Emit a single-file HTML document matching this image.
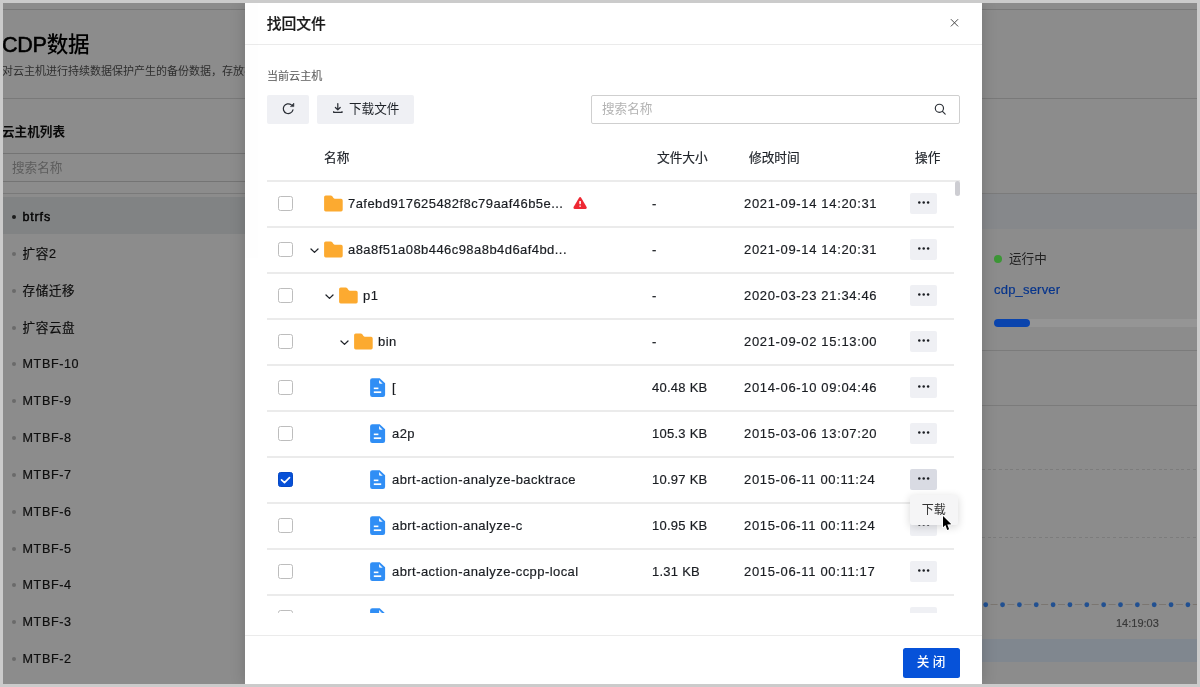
<!DOCTYPE html>
<html lang="zh-CN">
<head>
<meta charset="utf-8">
<title>CDP数据 - 找回文件</title>
<style>
*{box-sizing:border-box;margin:0;padding:0}
html,body{width:1200px;height:687px;overflow:hidden;background:#cbcbcb}
body{font-family:"Liberation Sans","Noto Sans CJK SC",sans-serif;font-size:12.6px;color:#1f2329;position:relative;-webkit-font-smoothing:antialiased}
.screen{position:absolute;left:3px;top:3px;width:1194px;height:681px;background:#fff;overflow:hidden;will-change:transform;opacity:.9999}
/* ---------- underlying page ---------- */
.page{position:absolute;left:0;top:0;width:1194px;height:681px;background:#fff}
.hl{position:absolute;height:1px;background:#dcdcdc;left:0;right:0}
.pg-title{position:absolute;left:-1px;top:27px;font-size:21.6px;font-weight:500;line-height:30px;color:#000;white-space:nowrap;letter-spacing:-.3px}
.pg-sub{position:absolute;left:-1px;top:60px;font-size:11px;line-height:16px;color:#555;white-space:nowrap}
.vm-h{position:absolute;left:-1px;top:119px;font-size:12.6px;font-weight:700;line-height:20px;color:#111;white-space:nowrap}
.vm-search{position:absolute;left:0;top:150px;width:400px;height:29px;border-top:1px solid #d4d4d4;border-bottom:1px solid #d4d4d4;font-size:12.6px;line-height:29px;padding-left:9px;color:#aaa}
.vm-list{position:absolute;left:0;top:194px;width:400px;list-style:none}
.vm-list li{height:36.85px;line-height:32.85px;padding-top:4px;padding-left:19.500px;font-size:12.6px;color:#1a1a1a;position:relative;white-space:nowrap;letter-spacing:.6px;-webkit-text-stroke:.2px #1a1a1a}
.vm-list li:before{content:"";position:absolute;left:8.500px;top:18px;width:4px;height:4px;border-radius:50%;background:#c2c2c2}
.vm-list li.on{background:#eceef1;color:#000;-webkit-text-stroke:.4px #000;letter-spacing:.8px}
.vm-list li.on:before{background:#333}
.mask{position:absolute;left:0;top:0;width:1194px;height:681px;background:rgba(0,0,0,.45)}
/* ---------- modal ---------- */
.modal{position:absolute;left:242px;top:0;width:737px;height:681px;background:#fff;box-shadow:0 0 14px rgba(0,0,0,.18)}

.m-title{position:absolute;left:21.700px;top:9.500px;font-size:14.8px;font-weight:500;line-height:22px;color:#1a1a1a;white-space:nowrap;-webkit-text-stroke:.15px #1a1a1a}
.m-close{position:absolute;left:704px;top:14px;width:11px;height:11px}
.m-hline{position:absolute;left:0;top:41px;width:737px;height:1px;background:#ebebeb}
.m-label{position:absolute;left:22px;top:64.500px;font-size:11.050px;line-height:16px;color:#606060;white-space:nowrap;-webkit-text-stroke:.1px #606060}
.btn{position:absolute;top:92px;height:29px;background:#eff0f4;border-radius:2px;font-size:12.6px;line-height:29px;color:#1f2329;white-space:nowrap}
.btn svg{position:absolute}
.m-search{position:absolute;left:346px;top:92px;width:368.5px;height:29px;border:1px solid #cfcfcf;border-radius:2px;font-size:12.6px;line-height:27px;padding-left:10px;color:#b3b3b3;background:#fff}
.m-search svg{position:absolute;right:12.200px;top:7.400px}
.th{position:absolute;top:145px;font-size:12.7px;line-height:20px;color:#1f2329;white-space:nowrap;-webkit-text-stroke:.18px #1f2329}
.tbody{position:absolute;left:22px;top:177px;width:693px;height:433px;overflow:hidden}
.row{-webkit-text-stroke:.18px #1a1d22;position:absolute;left:0;width:687px;height:46px;border-top:2px solid #ebebeb}
.row .cb{position:absolute;left:11px;top:14px;width:15px;height:15px;border:1px solid #bdbdbd;border-radius:2.500px;background:#fff}
.row .cb.on{background:#0650d8;border-color:#0648c4}
.row .cb svg{position:absolute;left:0;top:0}
.row .nm{position:absolute;top:0;line-height:44.5px;font-size:13px;white-space:nowrap;letter-spacing:.44px;color:#1a1d22}
.row .ic{position:absolute;overflow:visible}
.row .sz{position:absolute;left:385px;top:0;line-height:44.5px;font-size:13px;white-space:nowrap;letter-spacing:.25px;color:#1a1d22}
.row .tm{position:absolute;left:477px;top:0;line-height:44.5px;font-size:13px;white-space:nowrap;letter-spacing:.66px;color:#1a1d22}
.row .op{position:absolute;left:643px;top:11px;width:27px;height:21px;background:#eff0f4;border-radius:2px}.row .op svg{position:absolute;left:0;top:0;fill:#1a1d22}
.row .op.act{background:#d9dbe3}
.row .op i{position:absolute;top:8.7px;width:2.2px;height:2.2px;background:#1f2329;border-radius:50%}
.sb{position:absolute;left:687.500px;top:1px;width:5px;height:14.500px;border-radius:2.500px;background:#cdcdd2}.hline{position:absolute;left:22px;top:177px;width:693px;height:2px;background:#ebebeb}
.dd{position:absolute;left:665px;top:492px;width:47.500px;height:29.500px;background:#f5f5f6;border-radius:2px;box-shadow:0 2px 8px rgba(0,0,0,.16);font-size:12px;line-height:30px;text-align:center;color:#333}
.m-fline{position:absolute;left:0;top:632px;width:737px;height:1px;background:#ebebeb}
.m-ok{position:absolute;left:657.500px;top:645px;width:57px;height:29.500px;background:#0652d9;border-radius:2.500px;color:#fff;font-size:12.6px;font-weight:500;line-height:29.500px;text-align:center;white-space:nowrap}
.cursor{position:absolute;left:937.800px;top:511.200px}

.ov{position:absolute;left:0;top:0;width:1194px;height:681px;overflow:hidden}
.ov div,.ov span{position:absolute}
.r-band1{left:979px;top:191px;width:215px;height:35px;background:#86888b}
.r-line{left:979px;width:215px;height:1px;background:#7b7b7b}
.r-dash{left:979px;width:215px;height:1px;background:repeating-linear-gradient(90deg,#7c7c7c 0,#7c7c7c 3px,transparent 3px,transparent 5.700px)}
.r-dot{left:991px;top:252px;width:8px;height:8px;border-radius:50%;background:#3c9636}
.r-run{left:1006px;top:246px;font-size:12.6px;line-height:20px;color:#222;white-space:nowrap}
.r-link{left:991px;top:277px;font-size:13px;line-height:20px;color:#07358c;white-space:nowrap;letter-spacing:.2px;-webkit-text-stroke:.2px #07358c}
.r-track{left:991px;top:316px;width:203px;height:8px;background:#959595;border-radius:4px 0 0 4px}
.r-prog{left:991px;top:316px;width:36px;height:8px;background:#0a44ad;border-radius:4px}
.r-tl{left:979px;top:601px;width:215px;height:1px;background:repeating-linear-gradient(90deg,#7f7a75 0,#7f7a75 5px,transparent 5px,transparent 8.425px)}
.r-tl i{position:absolute;top:-1.900px;width:4.800px;height:4.800px;border-radius:50%;background:#215091}
.r-time{left:1113px;top:612px;font-size:11px;line-height:16px;color:#383838;-webkit-text-stroke:.15px #383838;white-space:nowrap;font-family:"Liberation Sans",sans-serif}
.r-band2{left:979px;top:636px;width:215px;height:23px;background:#80878f}
</style>
</head>
<body>
<div class="screen">
  <div class="page">
    <div class="hl" style="top:6px"></div>
    <div class="pg-title"><span style="-webkit-text-stroke:.55px #000">CDP</span>数据</div>
    <div class="pg-sub">对云主机进行持续数据保护产生的备份数据，存放在备份服务器</div>
    <div class="hl" style="top:95px"></div>
    <div class="vm-h">云主机列表</div>
    <div class="vm-search">搜索名称</div>
    <div class="hl" style="top:190px;width:400px"></div>
    <ul class="vm-list">
      <li class="on">btrfs</li>
      <li>扩容2</li>
      <li>存储迁移</li>
      <li>扩容云盘</li>
      <li>MTBF-10</li>
      <li>MTBF-9</li>
      <li>MTBF-8</li>
      <li>MTBF-7</li>
      <li>MTBF-6</li>
      <li>MTBF-5</li>
      <li>MTBF-4</li>
      <li>MTBF-3</li>
      <li>MTBF-2</li>
      <li>MTBF-1</li>
    </ul>
    <!--RIGHT-->
  </div>
  <div class="mask"></div>
  <div class="ov">
    <div class="r-line" style="top:190px"></div>
    <div class="r-band1"></div>
    <div class="r-dot"></div><span class="r-run">运行中</span>
    <span class="r-link">cdp_server</span>
    <div class="r-track"></div><div class="r-prog"></div>
    <div class="r-line" style="top:347px"></div>
    <div class="r-line" style="top:402px"></div>
    <div class="r-dash" style="top:466px"></div>
    <div class="r-dash" style="top:534px"></div>
    <svg class="r-tlsvg" style="position:absolute;left:979px;top:598px" width="215" height="8" viewBox="0 0 215 8"><path d="M-8.250 3.500H215" stroke="#7b7671" stroke-width="1" stroke-dasharray="7 9.850" fill="none"/><circle cx="3.70" cy="3.750" r="2.400" fill="#215091"/><circle cx="20.55" cy="3.750" r="2.400" fill="#215091"/><circle cx="37.40" cy="3.750" r="2.400" fill="#215091"/><circle cx="54.25" cy="3.750" r="2.400" fill="#215091"/><circle cx="71.10" cy="3.750" r="2.400" fill="#215091"/><circle cx="87.95" cy="3.750" r="2.400" fill="#215091"/><circle cx="104.80" cy="3.750" r="2.400" fill="#215091"/><circle cx="121.65" cy="3.750" r="2.400" fill="#215091"/><circle cx="138.50" cy="3.750" r="2.400" fill="#215091"/><circle cx="155.35" cy="3.750" r="2.400" fill="#215091"/><circle cx="172.20" cy="3.750" r="2.400" fill="#215091"/><circle cx="189.05" cy="3.750" r="2.400" fill="#215091"/><circle cx="205.90" cy="3.750" r="2.400" fill="#215091"/><circle cx="222.75" cy="3.750" r="2.400" fill="#215091"/></svg>
    <span class="r-time">14:19:03</span>
    <div class="r-band2"></div>
  </div>
  <div class="modal">
    <div class="m-title">找回文件</div>
    <svg class="m-close" viewBox="0 0 11 11"><path d="M1.900 2.200l7.200 7.200M9.100 2.200l-7.200 7.200" stroke="#4a4a4a" stroke-width="1" fill="none"/></svg>
    <div class="m-hline"></div>
    <div class="m-label">当前云主机</div>
    <div class="btn" style="left:22px;width:42px"><svg style="left:0;top:0" width="42" height="29" viewBox="0 0 42 29"><path d="M24.22 9.84A4.9 4.9 0 1 0 25.95 14.89" fill="none" stroke="#2b2f36" stroke-width="1.25" stroke-linecap="round"/><path d="M26.9 8.100v3.500h-3.500z" fill="#2b2f36" stroke="#2b2f36" stroke-width=".5" stroke-linejoin="round"/></svg></div>
    <div class="btn" style="left:72px;width:97px;padding-left:32px"><svg style="left:0;top:0" width="42" height="29" viewBox="0 0 42 29"><path d="M20.800 8.500v6.200M18.400 12.500l2.400 2.400 2.400-2.400M16.700 16.500v.900h8.300v-.900" fill="none" stroke="#2b2f36" stroke-width="1.250" stroke-linecap="round" stroke-linejoin="round"/></svg>下载文件</div>
    <div class="m-search">搜索名称<svg width="12" height="12" viewBox="0 0 12 12"><circle cx="5.400" cy="5.300" r="4.100" fill="none" stroke="#2b2f36" stroke-width="1.150"/><path d="M8.500 8.400l2.700 2.700" stroke="#2b2f36" stroke-width="1.150" stroke-linecap="round"/></svg></div>
    <div class="th" style="left:79px">名称</div>
    <div class="th" style="left:412px">文件大小</div>
    <div class="th" style="left:504px">修改时间</div>
    <div class="th" style="left:670px">操作</div>
    <div class="hline"></div>
    <div class="tbody">
      <div class="row" style="top:0px"><span class="cb"></span><svg class="ic" style="left:57px;top:13px" width="19" height="17" viewBox="-.1 -.4 19 17"><path d="M1.600 0H6.600C7.300 0 7.800.300 8.200.800L9.400 2.600C9.700 3.100 10.200 3.400 10.800 3.400H17A1.600 1.600 0 0 1 18.600 5V14.400A1.600 1.600 0 0 1 17 16H1.600A1.600 1.600 0 0 1 0 14.400V1.600A1.600 1.600 0 0 1 1.600 0Z" fill="#fcaa30"/></svg><span class="nm" style="left:81px">7afebd917625482f8c79aaf46b5e...</span><svg class="ic" style="left:306px;top:15px" width="14" height="13" viewBox="-.3 0 14 13"><path d="M6.800.100C7.300.100 7.700.400 8 .900L13.300 10.100C13.800 11 13.200 12 12.200 12H1.400C.400 12-.200 11 .300 10.100L5.600.900C5.900.400 6.300.100 6.800.100Z" fill="#ee2833"/><rect x="6" y="3.900" width="1.600" height="3.300" rx=".4" fill="#fff"/><circle cx="6.800" cy="9.200" r=".85" fill="#ffc4c9"/></svg><span class="sz">-</span><span class="tm">2021-09-14 14:20:31</span><span class="op"><svg width="27" height="21" viewBox="0 0 27 21"><circle cx="9.300" cy="9.600" r="1.250"/><circle cx="13.700" cy="9.600" r="1.250"/><circle cx="18.100" cy="9.600" r="1.250"/></svg></span></div>
      <div class="row" style="top:46px"><span class="cb"></span><svg class="ic" style="left:43px;top:20px" width="9" height="6" viewBox="0 0 9 6"><path d="M1 1L4.500 4.400 8 1" fill="none" stroke="#1f2329" stroke-width="1.300" stroke-linecap="round" stroke-linejoin="round"/></svg><svg class="ic" style="left:57px;top:13px" width="19" height="17" viewBox="-.1 -.4 19 17"><path d="M1.600 0H6.600C7.300 0 7.800.300 8.200.800L9.400 2.600C9.700 3.100 10.200 3.400 10.800 3.400H17A1.600 1.600 0 0 1 18.600 5V14.400A1.600 1.600 0 0 1 17 16H1.600A1.600 1.600 0 0 1 0 14.400V1.600A1.600 1.600 0 0 1 1.600 0Z" fill="#fcaa30"/></svg><span class="nm" style="left:81px">a8a8f51a08b446c98a8b4d6af4bd...</span><span class="sz">-</span><span class="tm">2021-09-14 14:20:31</span><span class="op"><svg width="27" height="21" viewBox="0 0 27 21"><circle cx="9.300" cy="9.600" r="1.250"/><circle cx="13.700" cy="9.600" r="1.250"/><circle cx="18.100" cy="9.600" r="1.250"/></svg></span></div>
      <div class="row" style="top:92px"><span class="cb"></span><svg class="ic" style="left:58px;top:20px" width="9" height="6" viewBox="0 0 9 6"><path d="M1 1L4.500 4.400 8 1" fill="none" stroke="#1f2329" stroke-width="1.300" stroke-linecap="round" stroke-linejoin="round"/></svg><svg class="ic" style="left:72px;top:13px" width="19" height="17" viewBox="-.1 -.4 19 17"><path d="M1.600 0H6.600C7.300 0 7.800.300 8.200.800L9.400 2.600C9.700 3.100 10.200 3.400 10.800 3.400H17A1.600 1.600 0 0 1 18.600 5V14.400A1.600 1.600 0 0 1 17 16H1.600A1.600 1.600 0 0 1 0 14.400V1.600A1.600 1.600 0 0 1 1.600 0Z" fill="#fcaa30"/></svg><span class="nm" style="left:96px">p1</span><span class="sz">-</span><span class="tm">2020-03-23 21:34:46</span><span class="op"><svg width="27" height="21" viewBox="0 0 27 21"><circle cx="9.300" cy="9.600" r="1.250"/><circle cx="13.700" cy="9.600" r="1.250"/><circle cx="18.100" cy="9.600" r="1.250"/></svg></span></div>
      <div class="row" style="top:138px"><span class="cb"></span><svg class="ic" style="left:73px;top:20px" width="9" height="6" viewBox="0 0 9 6"><path d="M1 1L4.500 4.400 8 1" fill="none" stroke="#1f2329" stroke-width="1.300" stroke-linecap="round" stroke-linejoin="round"/></svg><svg class="ic" style="left:87px;top:13px" width="19" height="17" viewBox="-.1 -.4 19 17"><path d="M1.600 0H6.600C7.300 0 7.800.300 8.200.800L9.400 2.600C9.700 3.100 10.200 3.400 10.800 3.400H17A1.600 1.600 0 0 1 18.600 5V14.400A1.600 1.600 0 0 1 17 16H1.600A1.600 1.600 0 0 1 0 14.400V1.600A1.600 1.600 0 0 1 1.600 0Z" fill="#fcaa30"/></svg><span class="nm" style="left:111px">bin</span><span class="sz">-</span><span class="tm">2021-09-02 15:13:00</span><span class="op"><svg width="27" height="21" viewBox="0 0 27 21"><circle cx="9.300" cy="9.600" r="1.250"/><circle cx="13.700" cy="9.600" r="1.250"/><circle cx="18.100" cy="9.600" r="1.250"/></svg></span></div>
      <div class="row" style="top:184px"><span class="cb"></span><svg class="ic" style="left:103px;top:12px" width="15" height="20" viewBox="-.1 -.15 15 20"><path d="M2.200 0H9.600L15 5.200V16.700A2.200 2.200 0 0 1 12.800 18.900H2.200A2.200 2.200 0 0 1 0 16.700V2.200A2.200 2.200 0 0 1 2.200 0Z" fill="#308ef5"/><path d="M8.900 1.900L12.600 5.600H10A1.100 1.100 0 0 1 8.900 4.500Z" fill="#eaf3fe"/><rect x="3.700" y="9.400" width="4.600" height="1.600" fill="#fff"/><rect x="3.700" y="13.200" width="7.400" height="1.700" fill="#fff"/></svg><span class="nm" style="left:125px">[</span><span class="sz">40.48 KB</span><span class="tm">2014-06-10 09:04:46</span><span class="op"><svg width="27" height="21" viewBox="0 0 27 21"><circle cx="9.300" cy="9.600" r="1.250"/><circle cx="13.700" cy="9.600" r="1.250"/><circle cx="18.100" cy="9.600" r="1.250"/></svg></span></div>
      <div class="row" style="top:230px"><span class="cb"></span><svg class="ic" style="left:103px;top:12px" width="15" height="20" viewBox="-.1 -.15 15 20"><path d="M2.200 0H9.600L15 5.200V16.700A2.200 2.200 0 0 1 12.800 18.900H2.200A2.200 2.200 0 0 1 0 16.700V2.200A2.200 2.200 0 0 1 2.200 0Z" fill="#308ef5"/><path d="M8.900 1.900L12.600 5.600H10A1.100 1.100 0 0 1 8.900 4.500Z" fill="#eaf3fe"/><rect x="3.700" y="9.400" width="4.600" height="1.600" fill="#fff"/><rect x="3.700" y="13.200" width="7.400" height="1.700" fill="#fff"/></svg><span class="nm" style="left:125px">a2p</span><span class="sz">105.3 KB</span><span class="tm">2015-03-06 13:07:20</span><span class="op"><svg width="27" height="21" viewBox="0 0 27 21"><circle cx="9.300" cy="9.600" r="1.250"/><circle cx="13.700" cy="9.600" r="1.250"/><circle cx="18.100" cy="9.600" r="1.250"/></svg></span></div>
      <div class="row" style="top:276px"><span class="cb on"><svg width="13" height="13" viewBox="0 0 13 13"><path d="M2.500 6.800l3 2.800 5-5" fill="none" stroke="#fff" stroke-width="1.650" stroke-linecap="round" stroke-linejoin="round"/></svg></span><svg class="ic" style="left:103px;top:12px" width="15" height="20" viewBox="-.1 -.15 15 20"><path d="M2.200 0H9.600L15 5.200V16.700A2.200 2.200 0 0 1 12.800 18.900H2.200A2.200 2.200 0 0 1 0 16.700V2.200A2.200 2.200 0 0 1 2.200 0Z" fill="#308ef5"/><path d="M8.900 1.900L12.600 5.600H10A1.100 1.100 0 0 1 8.900 4.500Z" fill="#eaf3fe"/><rect x="3.700" y="9.400" width="4.600" height="1.600" fill="#fff"/><rect x="3.700" y="13.200" width="7.400" height="1.700" fill="#fff"/></svg><span class="nm" style="left:125px">abrt-action-analyze-backtrace</span><span class="sz">10.97 KB</span><span class="tm">2015-06-11 00:11:24</span><span class="op act"><svg width="27" height="21" viewBox="0 0 27 21"><circle cx="9.300" cy="9.600" r="1.250"/><circle cx="13.700" cy="9.600" r="1.250"/><circle cx="18.100" cy="9.600" r="1.250"/></svg></span></div>
      <div class="row" style="top:322px"><span class="cb"></span><svg class="ic" style="left:103px;top:12px" width="15" height="20" viewBox="-.1 -.15 15 20"><path d="M2.200 0H9.600L15 5.200V16.700A2.200 2.200 0 0 1 12.800 18.900H2.200A2.200 2.200 0 0 1 0 16.700V2.200A2.200 2.200 0 0 1 2.200 0Z" fill="#308ef5"/><path d="M8.900 1.900L12.600 5.600H10A1.100 1.100 0 0 1 8.900 4.500Z" fill="#eaf3fe"/><rect x="3.700" y="9.400" width="4.600" height="1.600" fill="#fff"/><rect x="3.700" y="13.200" width="7.400" height="1.700" fill="#fff"/></svg><span class="nm" style="left:125px">abrt-action-analyze-c</span><span class="sz">10.95 KB</span><span class="tm">2015-06-11 00:11:24</span><span class="op"><svg width="27" height="21" viewBox="0 0 27 21"><circle cx="9.300" cy="9.600" r="1.250"/><circle cx="13.700" cy="9.600" r="1.250"/><circle cx="18.100" cy="9.600" r="1.250"/></svg></span></div>
      <div class="row" style="top:368px"><span class="cb"></span><svg class="ic" style="left:103px;top:12px" width="15" height="20" viewBox="-.1 -.15 15 20"><path d="M2.200 0H9.600L15 5.200V16.700A2.200 2.200 0 0 1 12.800 18.900H2.200A2.200 2.200 0 0 1 0 16.700V2.200A2.200 2.200 0 0 1 2.200 0Z" fill="#308ef5"/><path d="M8.900 1.900L12.600 5.600H10A1.100 1.100 0 0 1 8.900 4.500Z" fill="#eaf3fe"/><rect x="3.700" y="9.400" width="4.600" height="1.600" fill="#fff"/><rect x="3.700" y="13.200" width="7.400" height="1.700" fill="#fff"/></svg><span class="nm" style="left:125px">abrt-action-analyze-ccpp-local</span><span class="sz">1.31 KB</span><span class="tm">2015-06-11 00:11:17</span><span class="op"><svg width="27" height="21" viewBox="0 0 27 21"><circle cx="9.300" cy="9.600" r="1.250"/><circle cx="13.700" cy="9.600" r="1.250"/><circle cx="18.100" cy="9.600" r="1.250"/></svg></span></div>
      <div class="row" style="top:414px"><span class="cb"></span><svg class="ic" style="left:103px;top:12px" width="15" height="20" viewBox="-.1 -.15 15 20"><path d="M2.200 0H9.600L15 5.200V16.700A2.200 2.200 0 0 1 12.800 18.900H2.200A2.200 2.200 0 0 1 0 16.700V2.200A2.200 2.200 0 0 1 2.200 0Z" fill="#308ef5"/><path d="M8.900 1.900L12.600 5.600H10A1.100 1.100 0 0 1 8.900 4.500Z" fill="#eaf3fe"/><rect x="3.700" y="9.400" width="4.600" height="1.600" fill="#fff"/><rect x="3.700" y="13.200" width="7.400" height="1.700" fill="#fff"/></svg><span class="nm" style="left:125px">abrt-action-analyze-core</span><span class="sz">6.96 KB</span><span class="tm">2015-06-11 00:11:24</span><span class="op"><svg width="27" height="21" viewBox="0 0 27 21"><circle cx="9.300" cy="9.600" r="1.250"/><circle cx="13.700" cy="9.600" r="1.250"/><circle cx="18.100" cy="9.600" r="1.250"/></svg></span></div>
      <div class="sb"></div>
    </div>
    <div class="dd">下载</div>
    <div class="m-fline"></div>
    <div class="m-ok">关 闭</div>
  </div>
<svg class="cursor" width="14" height="20" viewBox="0 0 14 20"><path d="M2 2V13.200L4.400 11.100 6.200 15.900 8.100 15.200 6.300 10.600 10.300 10.300Z" fill="#fff" stroke="#fff" stroke-width="1.800" stroke-linejoin="round"/><path d="M2 2V13.200L4.400 11.100 6.200 15.900 8.100 15.200 6.300 10.600 10.300 10.300Z" fill="#000"/></svg>
</div>
</body>
</html>
